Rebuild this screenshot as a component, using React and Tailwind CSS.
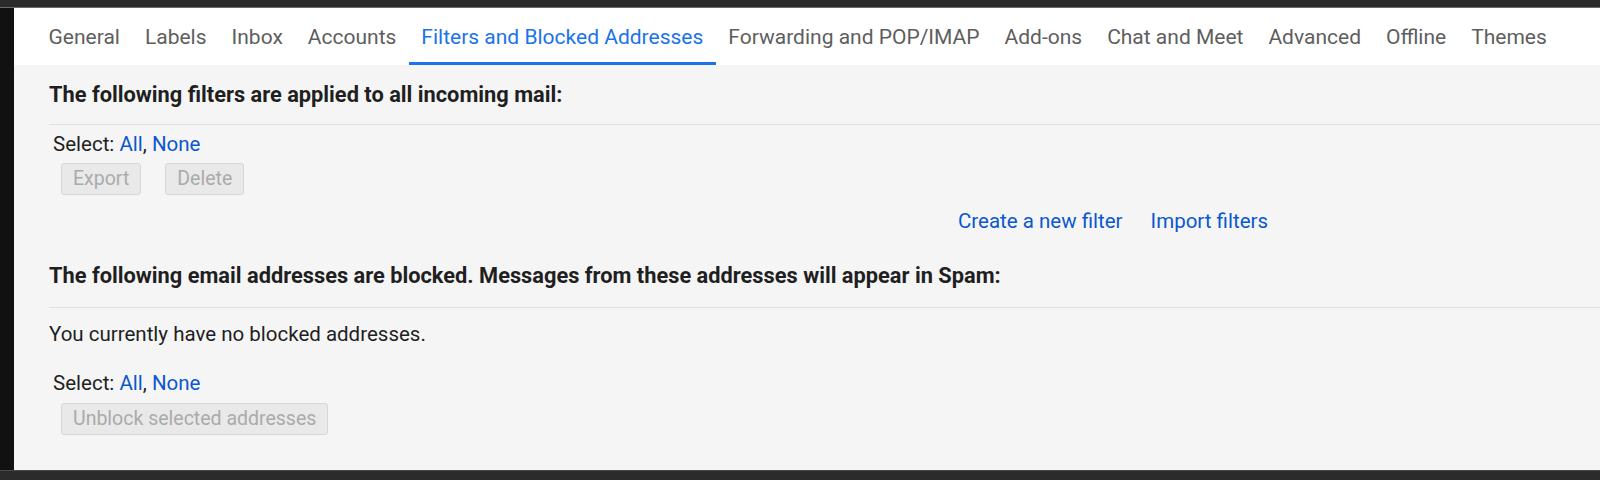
import React from "react";

const tabs = [
  "General",
  "Labels",
  "Inbox",
  "Accounts",
  "Filters and Blocked Addresses",
  "Forwarding and POP/IMAP",
  "Add-ons",
  "Chat and Meet",
  "Advanced",
  "Offline",
  "Themes",
];

const SelectRow = () => (
  <div className="pl-[4px] text-[20.5px] text-[#1f1f1f] leading-[28px]">
    Select: <a className="text-[#0b57d0] cursor-pointer">All</a>,{" "}
    <a className="text-[#0b57d0] cursor-pointer">None</a>
  </div>
);

const DisabledButton = ({ children }) => (
  <button
    disabled
    className="h-[32px] px-[11px] rounded-[3px] border border-[#d6d6d6] bg-[#e9e9e9] text-[19.5px] leading-[30px] text-[#ababab]"
  >
    {children}
  </button>
);

export default function App() {
  return (
    <div className="h-[480px] flex flex-col bg-[#2b2b2b] font-['Roboto',sans-serif]">
      <div className="h-[8px] shrink-0 bg-[#2b2b2b] border-b border-[#6a6a6a]" />
      <div className="flex h-[462px] shrink-0">
        <div className="w-[14px] bg-[#111111]" />
        <div className="flex-1 bg-[#f5f5f5] flex flex-col">
          <div className="flex bg-white h-[57px] pl-[22px]">
            {tabs.map((t) => {
              const active = t === "Filters and Blocked Addresses";
              return (
                <div
                  key={t}
                  className={`px-[12.5px] flex items-center text-[21px] leading-[28px] border-b-[3px] pt-[4px] ${
                    active
                      ? "text-[#1a73e8] border-[#1a73e8]"
                      : "text-[#5e5e5e] border-transparent"
                  }`}
                >
                  {t}
                </div>
              );
            })}
          </div>

          <div className="pl-[35px]">
            <div className="pt-[15px] pb-[15px] text-[21.8px] font-bold text-[#1f1f1f] leading-[29px]">
              The following filters are applied to all incoming mail:
            </div>
            <div className="border-t border-[#e0e0e0] pt-[5px]">
              <SelectRow />
              <div className="flex gap-[24px] pl-[12px] mt-[5px]">
                <DisabledButton>Export</DisabledButton>
                <DisabledButton>Delete</DisabledButton>
              </div>
              <div className="flex gap-[28px] pl-[909px] mt-[12px] text-[20.5px] text-[#0b57d0] leading-[28px]">
                <a className="cursor-pointer">Create a new filter</a>
                <a className="cursor-pointer">Import filters</a>
              </div>
            </div>

            <div className="pt-[26px] pb-[17px] text-[21.8px] font-bold text-[#1f1f1f] leading-[29px]">
              The following email addresses are blocked. Messages from these
              addresses will appear in Spam:
            </div>
            <div className="border-t border-[#e0e0e0] pt-[12px]">
              <div className="text-[20.5px] text-[#1f1f1f] leading-[28px]">
                You currently have no blocked addresses.
              </div>
              <div className="mt-[21px]">
                <SelectRow />
              </div>
              <div className="pl-[12px] mt-[6px]">
                <DisabledButton>Unblock selected addresses</DisabledButton>
              </div>
            </div>
          </div>
        </div>
      </div>
      <div className="flex-1 bg-[#2b2b2b] border-t border-[#4a4a4a]" />
    </div>
  );
}
